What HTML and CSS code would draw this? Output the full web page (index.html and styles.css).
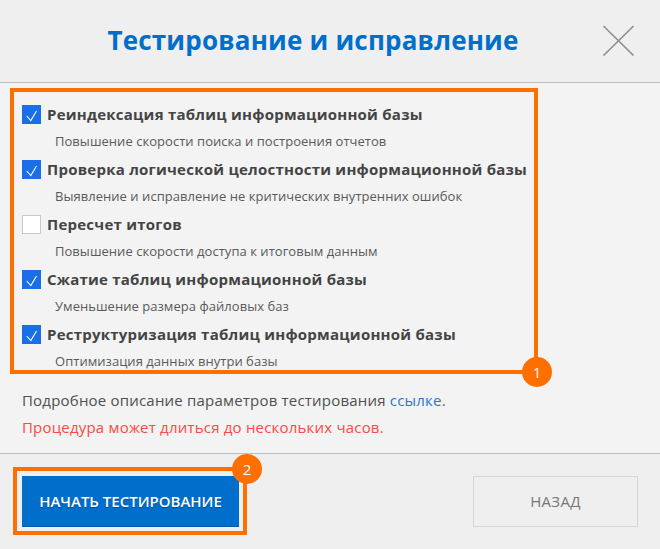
FILE: index.html
```html
<!DOCTYPE html>
<html lang="ru">
<head>
  <meta charset="UTF-8" />
  <title>Тестирование и исправление</title>
  <link rel="stylesheet" href="styles.css">
</head>
<body>
  <div class="header">
    <h1>Тестирование и исправление</h1>
    <div class="close">
      <svg width="33" height="31" viewBox="0 0 33 31"><path d="M1.5 1L31.5 30.5M31.5 1L1.5 30.5" stroke="#8f8f8f" stroke-width="1.6" fill="none"/></svg>
    </div>
  </div>

  <div class="content">
    <div class="options mark">
      <div class="option">
        <div class="option-row">
          <span class="check on"><svg width="19" height="19" viewBox="0 0 19 19"><path d="M4.7 11l4.1 4.5L14.5 6" stroke="#fff" stroke-width="1.1" fill="none"/></svg></span>
          <span class="option-title">Реиндексация таблиц информационной базы</span>
        </div>
        <p class="option-desc">Повышение скорости поиска и построения отчетов</p>
      </div>
      <div class="option">
        <div class="option-row">
          <span class="check on"><svg width="19" height="19" viewBox="0 0 19 19"><path d="M4.7 11l4.1 4.5L14.5 6" stroke="#fff" stroke-width="1.1" fill="none"/></svg></span>
          <span class="option-title">Проверка логической целостности информационной базы</span>
        </div>
        <p class="option-desc">Выявление и исправление не критических внутренних ошибок</p>
      </div>
      <div class="option">
        <div class="option-row">
          <span class="check"></span>
          <span class="option-title">Пересчет итогов</span>
        </div>
        <p class="option-desc">Повышение скорости доступа к итоговым данным</p>
      </div>
      <div class="option">
        <div class="option-row">
          <span class="check on"><svg width="19" height="19" viewBox="0 0 19 19"><path d="M4.7 11l4.1 4.5L14.5 6" stroke="#fff" stroke-width="1.1" fill="none"/></svg></span>
          <span class="option-title">Сжатие таблиц информационной базы</span>
        </div>
        <p class="option-desc">Уменьшение размера файловых баз</p>
      </div>
      <div class="option">
        <div class="option-row">
          <span class="check on"><svg width="19" height="19" viewBox="0 0 19 19"><path d="M4.7 11l4.1 4.5L14.5 6" stroke="#fff" stroke-width="1.1" fill="none"/></svg></span>
          <span class="option-title">Реструктуризация таблиц информационной базы</span>
        </div>
        <p class="option-desc">Оптимизация данных внутри базы</p>
      </div>
      <span class="badge badge-one">1</span>
    </div>

    <p class="note">Подробное описание параметров тестирования <a href="#">ссылке.</a></p>
    <p class="warning">Процедура может длиться до нескольких часов.</p>
  </div>

  <div class="footer">
    <div class="start-wrap mark">
      <a href="#" class="btn-start">НАЧАТЬ ТЕСТИРОВАНИЕ</a>
      <span class="badge badge-two">2</span>
    </div>
    <a href="#" class="btn-back">НАЗАД</a>
  </div>
</body>
</html>
```

FILE: styles.css
```css
* {
  box-sizing: border-box;
  margin: 0;
  padding: 0;
}

body {
  font-family: "Open Sans", "Noto Sans", sans-serif;
  color: #3c3c3c;
  background: #f3f3f3;
  width: 660px;
  height: 549px;
  overflow: hidden;
}

a {
  text-decoration: none;
}

.header {
  height: 83px;
  background: #efefef;
  border-bottom: 1px solid #bdbdbd;
  display: flex;
  align-items: center;
  justify-content: center;
  padding-right: 34px;
  position: relative;
}

.header h1 {
  font-size: 26px;
  font-weight: 700;
  color: #006ecb;
  letter-spacing: 0.2px;
  margin-top: -2px;
}

.close {
  position: absolute;
  left: 602px;
  top: 25px;
  line-height: 0;
}

.content {
  height: 370px;
  padding-top: 5px;
}

.mark {
  border: 4px solid #ff6f00;
  position: relative;
}

.options {
  width: 528px;
  height: 286px;
  margin-left: 10px;
  padding: 13px 0 0 8px;
}

.option {
  height: 55px;
}

.option-row {
  display: flex;
  align-items: center;
  height: 19px;
}

.check {
  width: 19px;
  height: 19px;
  margin-right: 6px;
  background: #fff;
  border: 1px solid #c9c9c9;
  line-height: 0;
  flex-shrink: 0;
}

.check.on {
  background: #1a6fe8;
  border: 0;
}

.option-title {
  font-size: 15px;
  font-weight: 700;
  letter-spacing: 0.24px;
  white-space: nowrap;
  color: #444;
  margin-top: -2px;
}

.option-desc {
  font-size: 13px;
  line-height: 16px;
  letter-spacing: 0.04px;
  color: #5a5a5a;
  margin: 9px 0 0 33px;
  white-space: nowrap;
}

.badge {
  position: absolute;
  width: 30px;
  height: 30px;
  border-radius: 50%;
  background: #ff6f00;
  color: #fff;
  font-size: 15px;
  line-height: 30px;
  text-align: center;
}

.badge-one {
  right: -18px;
  bottom: -17px;
}

.badge-two {
  right: -19px;
  top: -17px;
}

.note,
.warning {
  font-size: 15px;
  line-height: 20px;
  margin-left: 22px;
  white-space: nowrap;
  letter-spacing: 0.2px;
}

.note {
  margin-top: 16px;
  color: #4f4f4f;
}

.note a {
  color: #1a7ad4;
}

.warning {
  margin-top: 7px;
  color: #fb4a42;
}

.footer {
  height: 96px;
  background: #efefef;
  border-top: 1px solid #bdbdbd;
  display: flex;
  align-items: flex-start;
  justify-content: space-between;
  padding: 13px 22px 0 13px;
}

.start-wrap {
  width: 234px;
  height: 68px;
  padding: 5px;
}

.btn-start {
  display: block;
  width: 217px;
  height: 51px;
  background: #006ecb;
  box-shadow: inset 0 -1px 0 #005dad;
  color: #fff;
  font-size: 15px;
  font-weight: 600;
  line-height: 51px;
  text-align: center;
  white-space: nowrap;
  text-shadow: 0 1px 1px rgba(0, 0, 0, 0.3);
}

.btn-back {
  display: block;
  width: 165px;
  height: 51px;
  margin-top: 9px;
  border: 1px solid #d6d6d6;
  color: #777;
  font-size: 15px;
  line-height: 49px;
  text-align: center;
  letter-spacing: 0.3px;
}
```
